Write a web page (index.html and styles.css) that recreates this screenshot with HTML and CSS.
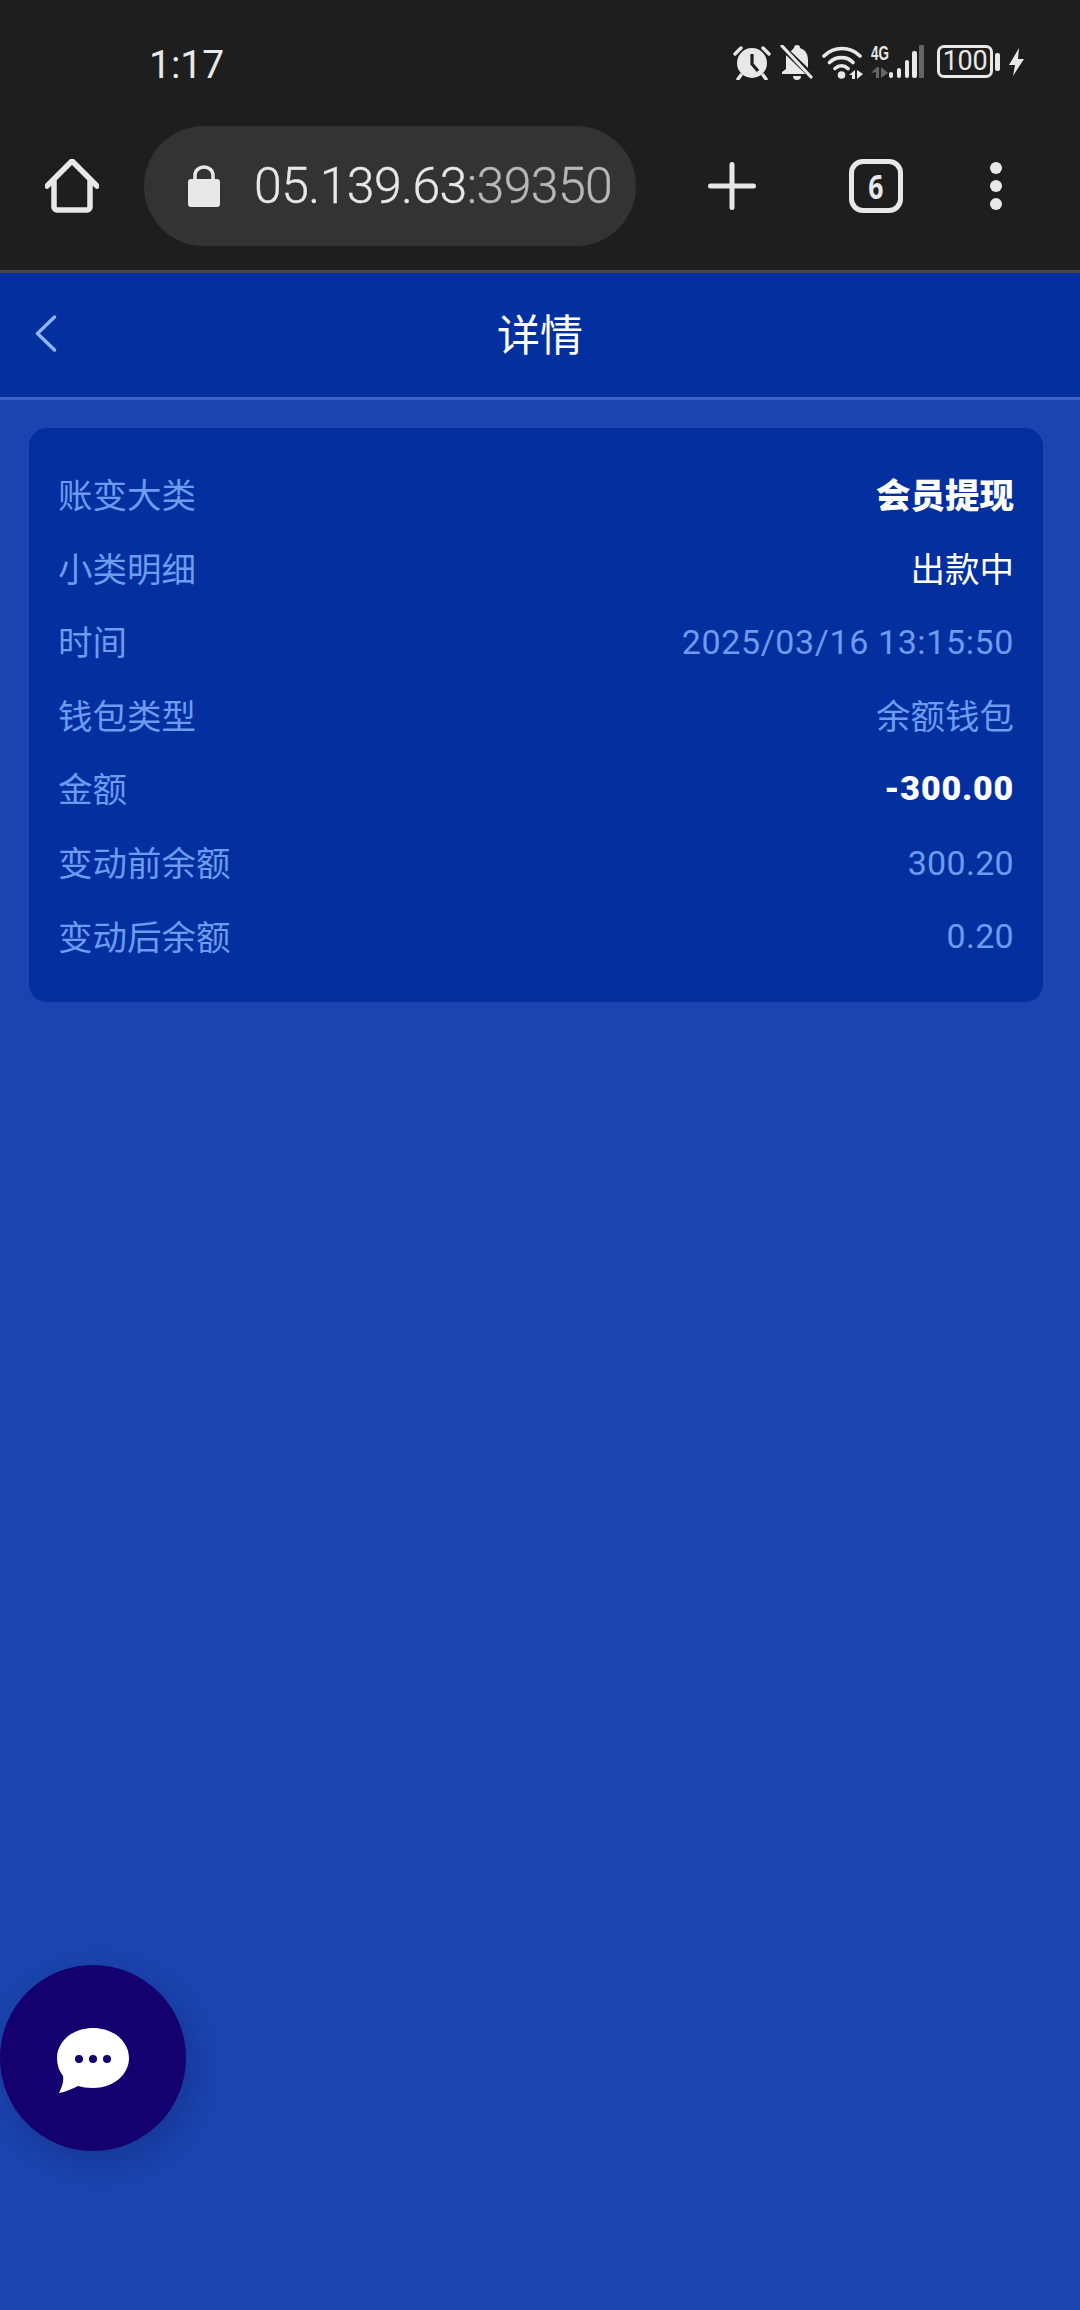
FILE: index.html
```html
<!DOCTYPE html>
<html lang="zh-CN">
<head>
<meta charset="utf-8">
<title>详情</title>
<link rel="stylesheet" href="styles.css">
</head>
<body>
<div class="screen">
  <header class="chrome">
    <div class="status">
      <span class="clock">1:17</span>
      <div class="status-icons">
        <svg class="i-alarm" width="38" height="35" viewBox="0 0 38 35"><circle cx="19" cy="18" r="15" fill="#e8e8e8"/><path d="M19 9v10l6 7" fill="none" stroke="#1e1e1e" stroke-width="3.2"/><path d="M2 9 8 3M36 9l-6-6M8 30l-3 4M30 30l3 4" stroke="#e8e8e8" stroke-width="3.4" stroke-linecap="round"/></svg>
        <svg class="i-bell" width="34" height="35" viewBox="0 0 34 35"><path d="M14 3a3 3 0 0 1 6 0c6 2 8 7 8 12v9l4 3v2H2v-2l4-3v-13z" fill="#e8e8e8"/><path d="M13 31h8a4 4 0 0 1-8 0z" fill="#e8e8e8"/><path d="M-1 -1 33 32" stroke="#1e1e1e" stroke-width="6"/><path d="M2 1 31 32" stroke="#e8e8e8" stroke-width="3.2" stroke-linecap="round"/></svg>
        <svg class="i-wifi" width="41" height="35" viewBox="0 0 41 35"><path d="M2 11C12 1 28 1 38 11M7.500 17.500C14 11 25 11 31 17.500M13 23.500C17 20 22 20 26 23.500" fill="none" stroke="#e8e8e8" stroke-width="3.600" stroke-linecap="round"/><circle cx="19.500" cy="30" r="3.800" fill="#e8e8e8"/><path d="M27 30 33 25v9h-3v-4zM35 25l6 4-6 5z" fill="#e8e8e8"/></svg>
        <div class="net">
          <span class="net-label">4G</span>
          <svg width="18" height="12" viewBox="0 0 18 12"><path d="M0 7 6 1h2v11H5V6zM10 1l7 6-7 5z" fill="#666"/></svg>
        </div>
        <svg class="i-signal" width="35" height="35" viewBox="0 0 35 35"><rect x="0" y="27" width="4" height="6" rx="2" fill="#e8e8e8"/><rect x="8" y="23" width="4" height="10" rx="2" fill="#e8e8e8"/><rect x="16" y="15" width="4" height="18" rx="2" fill="#e8e8e8"/><rect x="23" y="6" width="5" height="27" rx="2" fill="#e8e8e8"/><rect x="30" y="0" width="5" height="33" rx="1" fill="#666"/></svg>
        <div class="battery"><span class="battery-level">100</span></div>
        <span class="battery-nub"></span>
        <svg class="i-bolt" width="15" height="30" viewBox="0 0 15 30"><path d="M10 0 0 17h6l-2 11 11-17H9z" fill="#e8e8e8"/></svg>
      </div>
    </div>
    <div class="toolbar">
      <svg class="i-home" width="54" height="54" viewBox="0 0 54 54"><path d="M2 27 27 2l25 25M9 22v26a3 3 0 0 0 3 3h30a3 3 0 0 0 3-3V22" fill="none" stroke="#e8e8e8" stroke-width="5.500" stroke-linecap="round" stroke-linejoin="round"/></svg>
      <div class="pill">
        <svg width="32" height="42" viewBox="0 0 32 42"><path d="M7 18v-8a9 8 0 0 1 18 0v8" fill="none" stroke="#e8e8e8" stroke-width="3.500"/><rect y="14" width="32" height="28" rx="3" fill="#e8e8e8"/></svg>
        <span class="url">05.139.63<span class="url-dim">:39350</span></span>
      </div>
      <svg class="i-plus" width="48" height="48" viewBox="0 0 48 48"><path d="M2.500 24h43M24 2.500v43" stroke="#e8e8e8" stroke-width="5" stroke-linecap="round"/></svg>
      <div class="tabs"><span>6</span></div>
      <div class="dots"><i></i><i></i><i></i></div>
    </div>
  </header>
  <nav class="nav">
    <svg class="back" width="22" height="37" viewBox="0 0 22 37"><path d="M19.500 2 2.500 18.500l17 16.500" fill="none" stroke="#8fb6f8" stroke-width="3.400" stroke-linecap="round" stroke-linejoin="round"/></svg>
    <h1 class="title">详情</h1>
  </nav>
  <main class="content">
    <section class="card">
      <div class="row"><span>账变大类</span><span class="strong">会员提现</span></div>
      <div class="row"><span>小类明细</span><span class="white">出款中</span></div>
      <div class="row"><span>时间</span><span class="num date">2025/03/16 13:15:50</span></div>
      <div class="row"><span>钱包类型</span><span>余额钱包</span></div>
      <div class="row"><span>金额</span><span class="amount">-300.00</span></div>
      <div class="row"><span>变动前余额</span><span class="num">300.20</span></div>
      <div class="row"><span>变动后余额</span><span class="num">0.20</span></div>
    </section>
  </main>
  <button class="fab" type="button" aria-label="chat">
    <svg width="72" height="65" viewBox="0 0 72 65"><path d="M36 0C56 0 72 13 72 30S56 60 36 60c-6 0-11-1-15-2C15 61 8 64 2 65c3-6 5-12 4-17C2 43 0 37 0 30 0 13 16 0 36 0z" fill="#fff"/><circle cx="22" cy="31" r="4" fill="#14006e"/><circle cx="36" cy="31" r="4" fill="#14006e"/><circle cx="50" cy="31" r="4" fill="#14006e"/></svg>
  </button>
</div>
</body>
</html>
```
FILE: styles.css
```css
* { box-sizing: border-box; }
html, body { margin: 0; padding: 0; }
body { font-family: Roboto, "Noto Sans CJK SC", sans-serif; background: #1b44ae; }

.screen { position: relative; width: 1080px; height: 2310px; overflow: hidden; display: flex; flex-direction: column; background: #1b44ae; }

.chrome { height: 273px; background: #1e1e1e; border-bottom: 3px solid #45474d; display: flex; flex-direction: column; }

.status { height: 126px; display: flex; justify-content: space-between; padding: 45px 56px 0 149px; }
.clock { font-size: 39px; line-height: 35px; color: #e8e8e8; height: 35px; padding-top: 3px; }
.status-icons { display: flex; align-items: flex-start; height: 35px; }
.i-bell { margin-left: 9px; }
.i-wifi { margin-left: 8px; }
.net { margin-left: 8px; width: 18px; height: 33px; display: flex; flex-direction: column; justify-content: space-between; }
.net-label { font-family: "Liberation Sans", sans-serif; font-size: 21px; line-height: 15px; font-weight: 700; color: #e8e8e8; transform: scaleX(.64); transform-origin: left; white-space: nowrap; }
.i-signal { margin-left: 0; }
.battery { width: 56px; height: 33px; margin-left: 13px; border: 3.500px solid #e8e8e8; border-radius: 7px; display: flex; align-items: center; justify-content: center; }
.battery-level { font-size: 27px; color: #e8e8e8; line-height: 1; letter-spacing: -.3px; }
.battery-nub { width: 5px; height: 18px; margin: 8px 0 0 2px; background: #e8e8e8; border-radius: 2px; }
.i-bolt { margin: 3px 0 0 9px; }

.toolbar { height: 144px; display: flex; align-items: flex-start; padding-top: 0; position: relative; }
.i-home { margin: 33px 0 0 45px; flex: none; }
.pill { margin-left: 45px; width: 492px; height: 120px; background: #333; border-radius: 60px; display: flex; align-items: center; padding-left: 44px; gap: 34px; }
.url { font-size: 50px; font-weight: 300; letter-spacing: -.6px; color: #e8e8e8; line-height: 1; white-space: nowrap; -webkit-text-stroke: .3px currentColor; }
.url-dim { color: #b8b8b8; }
.i-plus { margin: 36px 0 0 72px; flex: none; }
.tabs { margin: 33px 0 0 93px; width: 54px; height: 54px; border: 5.500px solid #e8e8e8; border-radius: 14px; display: flex; align-items: center; justify-content: center; flex: none; }
.tabs span { font-family: "Open Sans", sans-serif; font-size: 34px; font-weight: 700; color: #e8e8e8; line-height: 1; transform: scaleX(.78); }
.dots { margin: 36px 0 0 87px; display: flex; flex-direction: column; gap: 6px; flex: none; }
.dots i { display: block; width: 12px; height: 12px; border-radius: 50%; background: #e8e8e8; }

.nav { height: 127px; background: #03309e; border-bottom: 3px solid #3a61c8; display: flex; align-items: center; justify-content: center; position: relative; flex: none; }
.back { position: absolute; left: 35px; top: 42px; }
.title { margin: 0; font-family: "Noto Sans CJK SC", sans-serif; font-size: 43px; font-weight: 400; color: #fff; line-height: 1; padding-bottom: 6px; }

.content { padding: 28px 37px 0 29px; }
.card { background: #03309e; border-radius: 18px; padding: 30px 29px 29px; }
.row { height: 73.600px; padding-bottom: 3px; display: flex; justify-content: space-between; align-items: center; font-family: "Noto Sans CJK SC", sans-serif; font-size: 34.500px; line-height: 1; color: #6c9bf0; white-space: nowrap; }
.num { font-family: Roboto, sans-serif; font-size: 34px; letter-spacing: .3px; margin-top: 3px; }
.date { letter-spacing: .62px; }
.white { color: #fff; }
.strong { color: #fff; font-weight: 900; }
.amount { font-family: Roboto, sans-serif; font-size: 34px; color: #fff; font-weight: 900; letter-spacing: .8px; }

.fab { position: absolute; left: 0; top: 1965px; width: 186px; height: 186px; border: 0; padding: 4px 0 0; border-radius: 50%; background: #14006e; box-shadow: 6px 10px 28px rgba(10, 20, 90, .28); display: flex; align-items: center; justify-content: center; }
```
